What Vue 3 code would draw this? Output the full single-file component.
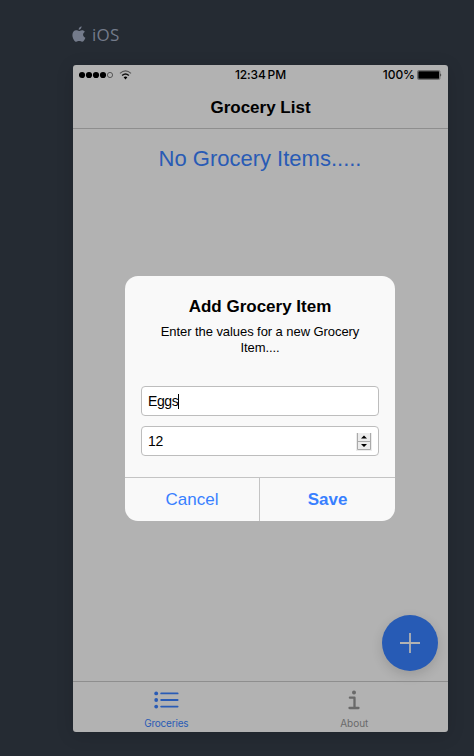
<script setup>
import { ref } from 'vue'

const itemName = ref('Eggs')
const quantity = ref('12')
</script>

<template>
  <main class="preview">
    <header class="platform">
      <svg class="apple" width="14" height="17" viewBox="0 0 14 17">
        <path d="M9.6 0.3C9.7 2.1 8.3 3.8 6.7 3.8C6.5 2.2 7.9 0.6 9.6 0.3ZM7 5C7.6 5 8.5 4.2 10 4.2C11.2 4.2 12.3 4.9 12.9 5.7C10.2 7.2 10.7 10.7 13.4 11.7C12.7 13.6 11.5 15.8 10.1 15.8C9 15.8 8.6 15.1 7.2 15.1C5.8 15.1 5.3 15.8 4.3 15.8C2.4 15.8 0.4 12.1 0.4 9C0.4 6 2.2 4.3 4.1 4.3C5.4 4.3 6.3 5 7 5Z" />
      </svg>
      <span>iOS</span>
    </header>

    <section class="phone">
      <div class="status">
        <div class="signal">
          <svg width="54" height="12" viewBox="0 0 54 12">
            <circle cx="3" cy="6" r="3.1" />
            <circle cx="10" cy="6" r="3.1" />
            <circle cx="17" cy="6" r="3.1" />
            <circle cx="24" cy="6" r="3.1" />
            <circle cx="31" cy="6" r="2.6" fill="none" stroke="#333" stroke-width=".7" />
            <g fill="none" stroke="#111">
              <path d="M41 4.4Q46.5-.5 52 4.4" stroke="#555" stroke-width="1.2" />
              <path d="M43.1 6.5Q46.5 3.5 49.9 6.5" stroke-width="1.5" />
            </g>
            <path d="M44.6 8.3Q46.5 6.8 48.4 8.3L46.5 10.5Z" />
          </svg>
        </div>
        <span class="time">12:34 PM</span>
        <div class="power">
          <span>100%</span>
          <svg width="25" height="10" viewBox="0 0 25 10">
            <rect x=".5" y=".5" width="22.4" height="9" rx="1.2" fill="none" stroke="#555" stroke-width=".7" />
            <rect x="1.3" y="1.3" width="20.8" height="7.4" rx=".5" />
            <path d="M23.5 3.2Q25 5 23.5 6.8Z" />
          </svg>
        </div>
      </div>
      <h1 class="title">Grocery List</h1>

      <div class="content">
        <p class="empty">No Grocery Items.....</p>
        <button class="fab" aria-label="Add item">
          <svg width="20" height="20" viewBox="0 0 20 20">
            <path d="M0 10H20M10 0V20" stroke="#b2b2b2" stroke-width="1.8" />
          </svg>
        </button>
      </div>

      <nav class="tabs">
        <a class="tab active">
          <svg width="26" height="20" viewBox="0 0 26 20">
            <g fill="#295bb5">
              <circle cx="2.2" cy="3.4" r="1.9" />
              <circle cx="2.2" cy="10" r="1.9" />
              <circle cx="2.2" cy="16.6" r="1.9" />
            </g>
            <path d="M7.2 3.4H23.6M7.2 10H23.6M7.2 16.6H23.6" stroke="#295bb5" stroke-width="1.9" stroke-linecap="round" />
          </svg>
          <span>Groceries</span>
        </a>
        <a class="tab">
          <svg width="12" height="20" viewBox="0 0 12 20">
            <circle cx="6" cy="2.5" r="2" fill="#6a6a6a" />
            <path d="M1.9 7.7H6.5V18M1.5 18H10.5" fill="none" stroke="#6a6a6a" stroke-width="2.3" stroke-linejoin="round" stroke-linecap="round" />
          </svg>
          <span>About</span>
        </a>
      </nav>

      <div class="overlay">
        <form class="dialog" @submit.prevent>
          <h2>Add Grocery Item</h2>
          <p class="message">Enter the values for a new Grocery Item....</p>
          <div class="fields">
            <div class="field"><span>{{ itemName }}</span><i class="caret"></i></div>
            <div class="field">
              <span>{{ quantity }}</span>
              <svg class="stepper" width="16" height="19" viewBox="0 0 16 19">
                <path d="M0 1H16V19H0Z" fill="#ececec" />
                <path d="M1.5 1V17.5H14.5V1M1.5 9.5H14.5" fill="none" stroke="#aaa" />
                <path d="M5 6.5L8 3.5L11 6.5ZM5 12L8 15L11 12Z" fill="#000" />
              </svg>
            </div>
          </div>
          <div class="actions">
            <button type="button">Cancel</button>
            <button type="submit" class="save">Save</button>
          </div>
        </form>
      </div>
    </section>
  </main>
</template>

<style>
body {
  margin: 0;
  background: #252b33;
}
</style>

<style scoped>
* {
  box-sizing: border-box;
}
.preview {
  height: 756px;
  padding: 25px 26px 24px 72px;
  overflow: hidden;
  background: #252b33;
  font-family: "Liberation Sans", Arial, sans-serif;
}
.platform {
  display: flex;
  align-items: center;
  height: 20px;
  gap: 6px;
  color: #747b8b;
  font: 500 17px/20px "Open Sans", sans-serif;
  letter-spacing: .3px;
}
.apple {
  fill: #747b8b;
  margin-top: -2px;
}
.phone {
  position: relative;
  display: flex;
  flex-direction: column;
  width: 375px;
  height: 667px;
  margin: 20px 0 0 1px;
  border-radius: 3px;
  background: #b2b2b2;
  box-shadow: 0 3px 18px rgba(0, 0, 0, .14);
}
.status {
  display: grid;
  grid-template-columns: 1fr auto 1fr;
  align-items: center;
  height: 20px;
  padding: 0 6px;
  font: 500 12px/20px Inter, sans-serif;
}
.time {
  letter-spacing: -.1px;
  word-spacing: -1.3px;
}
.signal,
.power {
  display: flex;
  align-items: center;
}
.power {
  justify-content: flex-end;
  gap: 3px;
  letter-spacing: -.05px;
}
.power span {
  margin-right: -1px;
}
.title {
  height: 44px;
  margin: 0;
  padding-top: 1px;
  border-bottom: 1px solid #8e8e8e;
  font-size: 17px;
  line-height: 44px;
  text-align: center;
}
.content {
  display: flex;
  flex: 1;
  flex-direction: column;
  justify-content: space-between;
  padding: 16px 10px 10px;
}
.empty {
  margin: 0;
  padding-right: 1px;
  color: #295bb5;
  font-size: 22px;
  line-height: 27px;
  text-align: center;
}
.fab {
  display: flex;
  align-self: flex-end;
  align-items: center;
  justify-content: center;
  width: 56px;
  height: 56px;
  padding: 0;
  border: 0;
  border-radius: 50%;
  background: #275bb5;
  box-shadow: 0 4px 12px rgba(0, 0, 0, .14);
}
.tabs {
  display: flex;
  height: 51px;
  border-top: 1px solid #8e8e8e;
}
.tab {
  display: flex;
  flex: 1;
  flex-direction: column;
  align-items: center;
  padding-top: 8px;
  color: #6a6a6a;
  font: 10px/12px Inter, sans-serif;
}
.tab span {
  margin-top: 7px;
}
.active {
  color: #295bb5;
}
.active span {
  padding-right: 1px;
  letter-spacing: -.2px;
}
.overlay {
  position: absolute;
  inset: 0;
  display: flex;
  align-items: center;
  justify-content: center;
  padding-right: 1px;
}
.dialog {
  width: 270px;
  height: 245px;
  overflow: hidden;
  border-radius: 13px;
  background: #f9f9f9;
  text-align: center;
}
.dialog h2 {
  margin: 0;
  padding-top: 21px;
  font-size: 17px;
  line-height: 20px;
}
.message {
  margin: 0;
  padding: 7px 16px 0;
  font-size: 13px;
  line-height: 16px;
  letter-spacing: -.07px;
}
.fields {
  display: grid;
  gap: 10px;
  padding: 30px 16px 21px;
}
.field {
  display: flex;
  align-items: center;
  height: 30px;
  padding: 0 6px;
  border: 1px solid #bdbdbd;
  border-radius: 4px;
  background: #fff;
  font-size: 14px;
  letter-spacing: -.4px;
}
.caret {
  width: 1px;
  height: 15px;
  background: #000;
}
.stepper {
  margin-left: auto;
}
.actions {
  display: flex;
  height: 44px;
  border-top: 1px solid #c4c4c4;
}
.actions button {
  flex: 0 0 134px;
  padding: 0;
  border: 0;
  background: none;
  color: #3880ff;
  font: 17px/43px "Liberation Sans", Arial, sans-serif;
}
.actions .save {
  flex: 1;
  border-left: 1px solid #c4c4c4;
  font-weight: 700;
}
</style>
